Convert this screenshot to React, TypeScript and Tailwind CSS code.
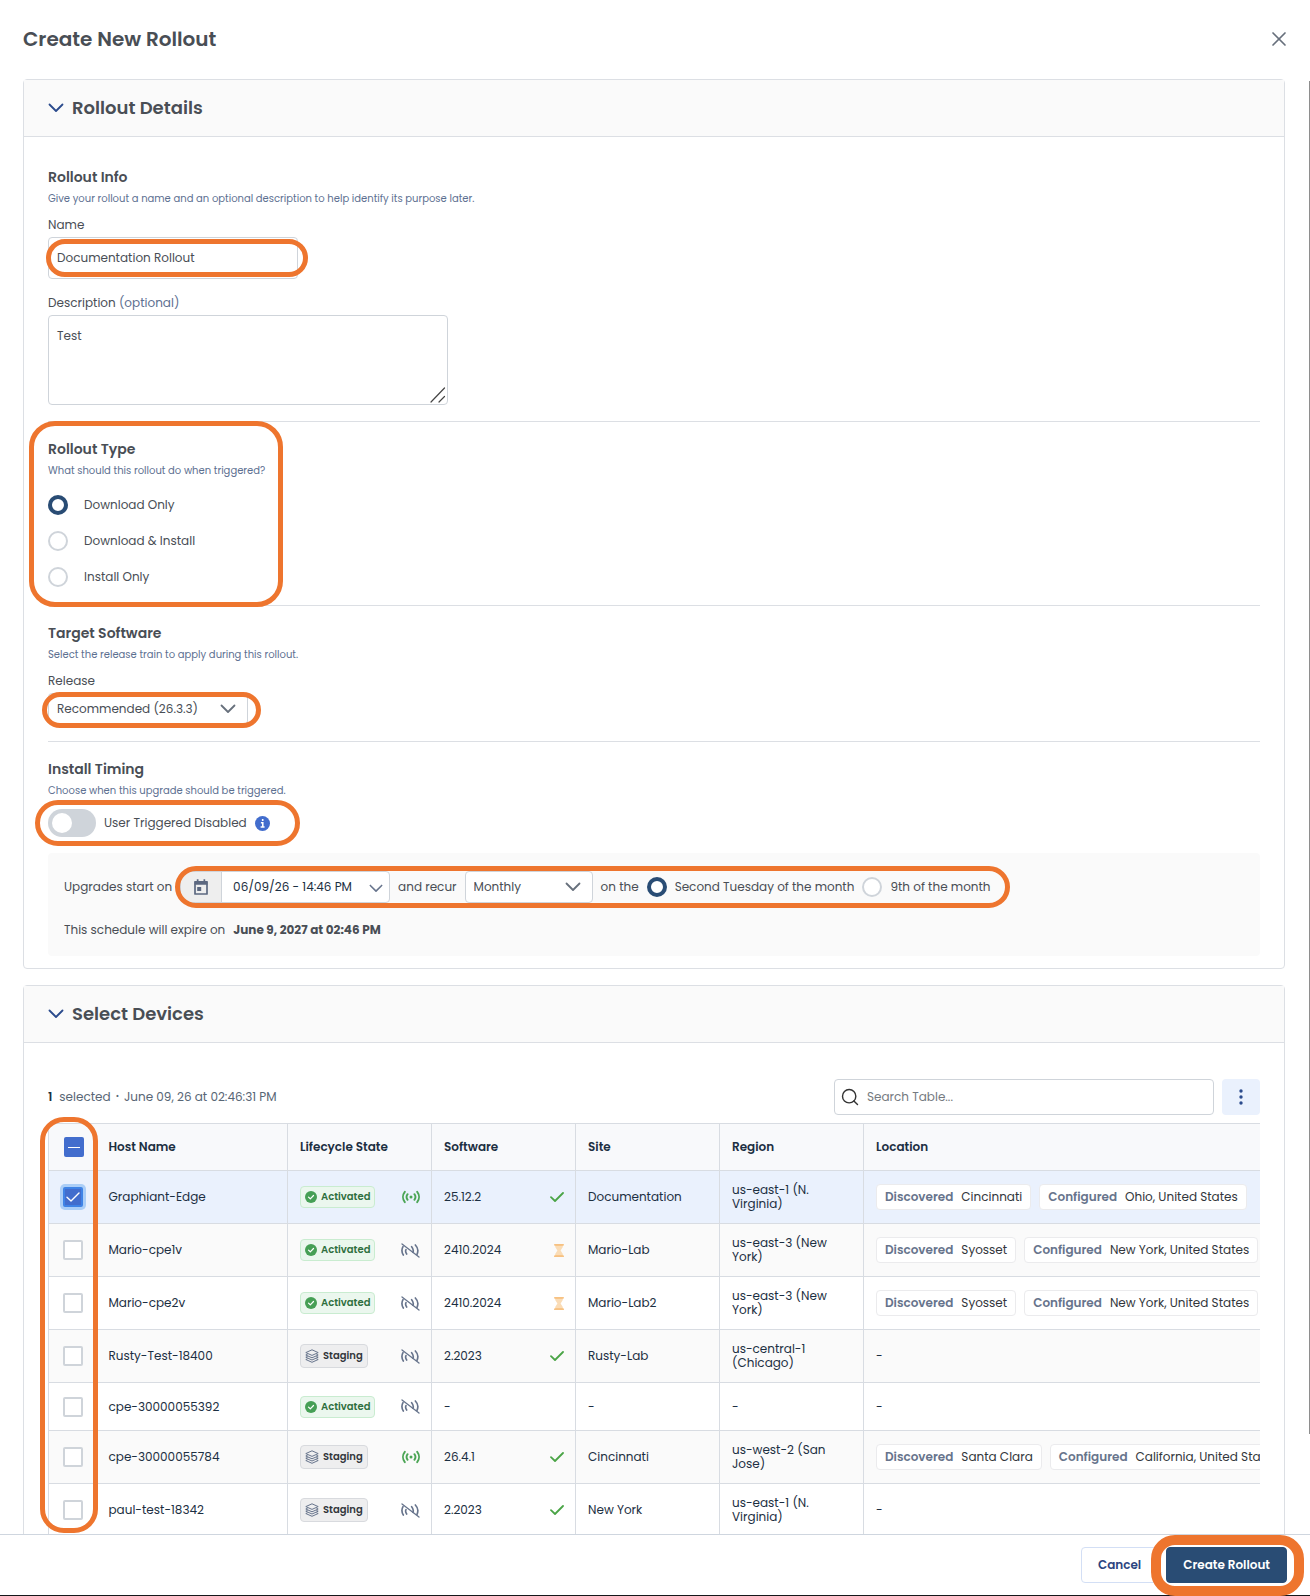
import React from 'react';
import { Search, X } from 'lucide-react';

interface Device {
  id: string;
  host: string;
  state: 'activated' | 'staging';
  online: boolean;
  software: string;
  softwareStatus?: 'current' | 'pending';
  site: string;
  region: string;
  discovered?: string;
  configured?: string;
}

const devices: Device[] = [
  {
    id: '1',
    host: 'Graphiant-Edge',
    state: 'activated',
    online: true,
    software: '25.12.2',
    softwareStatus: 'current',
    site: 'Documentation',
    region: 'us-east-1 (N. Virginia)',
    discovered: 'Cincinnati',
    configured: 'Ohio, United States'
  },
  {
    id: '2',
    host: 'Mario-cpe1v',
    state: 'activated',
    online: false,
    software: '2410.2024',
    softwareStatus: 'pending',
    site: 'Mario-Lab',
    region: 'us-east-3 (New York)',
    discovered: 'Syosset',
    configured: 'New York, United States'
  },
  {
    id: '3',
    host: 'Mario-cpe2v',
    state: 'activated',
    online: false,
    software: '2410.2024',
    softwareStatus: 'pending',
    site: 'Mario-Lab2',
    region: 'us-east-3 (New York)',
    discovered: 'Syosset',
    configured: 'New York, United States'
  },
  {
    id: '4',
    host: 'Rusty-Test-18400',
    state: 'staging',
    online: false,
    software: '2.2023',
    softwareStatus: 'current',
    site: 'Rusty-Lab',
    region: 'us-central-1 (Chicago)'
  },
  {
    id: '5',
    host: 'cpe-30000055392',
    state: 'activated',
    online: false,
    software: '-',
    site: '-',
    region: '-'
  },
  {
    id: '6',
    host: 'cpe-30000055784',
    state: 'staging',
    online: true,
    software: '26.4.1',
    softwareStatus: 'current',
    site: 'Cincinnati',
    region: 'us-west-2 (San Jose)',
    discovered: 'Santa Clara',
    configured: 'California, United States'
  },
  {
    id: '7',
    host: 'paul-test-18342',
    state: 'staging',
    online: false,
    software: '2.2023',
    softwareStatus: 'current',
    site: 'New York',
    region: 'us-east-1 (N. Virginia)'
  }
];

const radioClass =
  'm-0 h-5 w-5 shrink-0 appearance-none rounded-full border-2 border-[#cfd4da] bg-white checked:border-4 checked:border-[#294c74]';

function Chevron({ className }: { className: string }) {
  return (
    <svg viewBox="0 0 16 10" fill="none" stroke="currentColor" strokeWidth="1.8" strokeLinecap="round" strokeLinejoin="round" className={className}>
      <path d="M1.5 1.5 8 8l6.5-6.5" />
    </svg>
  );
}

function CheckMark({ className }: { className: string }) {
  return (
    <svg viewBox="0 0 14 10" fill="none" stroke="currentColor" strokeLinecap="round" strokeLinejoin="round" className={className}>
      <path d="m1 5.2 4 3.8L13 1" />
    </svg>
  );
}

// Orange outline that draws attention to a control
function Highlight({ className }: { className: string }) {
  return <span aria-hidden="true" className={`pointer-events-none absolute z-10 border-[#ee752e] ${className}`} />;
}

function SignalIcon() {
  return (
    <svg viewBox="0 0 18 14" fill="none" stroke="#4ba555" strokeWidth="1.9" strokeLinecap="round" className="h-[14px] w-[18px]">
      <circle cx="9" cy="7" r="1.5" fill="#4ba555" stroke="none" />
      <path d="M5.6 4.2a4.6 4.6 0 0 0 0 5.6M12.4 4.2a4.6 4.6 0 0 1 0 5.6M2.8 1.8a8.4 8.4 0 0 0 0 10.4M15.2 1.8a8.4 8.4 0 0 1 0 10.4" />
    </svg>
  );
}

function SignalOffIcon() {
  return (
    <svg viewBox="0 0 57 45" fill="none" stroke="#67748c" strokeWidth="5" strokeLinecap="round" className="h-[15px] w-[19px]">
      <path d="M3 3 54 42" strokeWidth="4" />
      <path d="M6 11C2 18 2 28 7 36M15 20c-2 4-1 9 2 13M32 11c5 6 6 11 4 17M43 6c8 8 9 19 5 28" />
    </svg>
  );
}

function LayersIcon() {
  return (
    <svg viewBox="0 0 14 14" fill="none" stroke="#67748c" strokeWidth="1" strokeLinejoin="round" className="h-[14px] w-[14px]">
      <path d="M7 .8 13.2 3.6 7 6.4.8 3.6z" />
      <path d="M2.6 5.2.8 6 7 8.8 13.2 6l-1.8-.8M2.6 7.4l-1.8.8L7 11l6.2-2.8-1.8-.8M2.6 9.7l-1.8.8L7 13.3l6.2-2.8-1.8-.8" />
    </svg>
  );
}

function HourglassIcon() {
  return (
    <svg viewBox="0 0 10 13" className="h-[13px] w-[10px]">
      <path d="M1.2 1h7.6v2L6.6 6.500l2.200 3.500v2H1.200v-2l2.200-3.500L1.200 3z" fill="#fadcb6" />
      <path d="M.6.8h8.800M.6 12.200h8.800" stroke="#f5ae5b" strokeWidth="1.2" strokeLinecap="round" />
    </svg>
  );
}

function StateBadge({ state }: { state: Device['state'] }) {
  if (state === 'activated') {
    return (
      <span className="flex h-[22px] items-center gap-1 rounded border border-[#c9ecd0] bg-[#ebf7ee] px-1 text-[10px] font-semibold text-[#2f6f3e]">
        <svg viewBox="0 0 12 12" className="h-3 w-3">
          <circle cx="6" cy="6" r="6" fill="#469f55" />
          <path d="m3.5 6.1 1.8 1.7 3.2-3.3" fill="none" stroke="#fff" strokeWidth="1.2" strokeLinecap="round" strokeLinejoin="round" />
        </svg>
        Activated
      </span>
    );
  }
  return (
    <span className="flex h-6 items-center gap-1 rounded border border-[#d8dade] bg-[#eeeeef] px-1 text-[10px] font-semibold text-[#32363b]">
      <LayersIcon />
      Staging
    </span>
  );
}

function LocationTag({ label, value }: { label: string; value: string }) {
  return (
    <span className="flex h-[26px] items-center gap-2 rounded border border-[#ebebed] bg-white px-2 whitespace-nowrap text-[#32363b]">
      <b className="font-semibold text-[#67748c]">{label}</b>
      {value}
    </span>
  );
}

function PanelHeader({ title }: { title: string }) {
  return (
    <h2 className="border-b border-[#dcdfe4] bg-[#fafafa]">
      <button type="button" aria-expanded="true" className="flex h-14 w-full items-center gap-2 px-6 text-left text-lg font-semibold">
        <Chevron className="h-[10px] w-4 text-[#2b4b8d]" />
        {title}
      </button>
    </h2>
  );
}

function SectionTitle({ title, hint }: { title: string; hint: string }) {
  return (
    <div>
      <h3 className="text-sm leading-6 font-semibold">{title}</h3>
      <p className="text-[10px] leading-5 text-[#5d7091]">{hint}</p>
    </div>
  );
}

function RolloutDetails() {
  return (
    <section className="rounded border border-[#dcdfe4]">
      <PanelHeader title="Rollout Details" />
      <div className="px-6 pt-7 pb-3">
        <div className="border-b border-[#dcdfe4] pb-4">
          <SectionTitle title="Rollout Info" hint="Give your rollout a name and an optional description to help identify its purpose later." />
          <label htmlFor="name" className="mt-1.5 mb-0.5 block">Name</label>
          <div className="relative w-[250px]">
            <input id="name" defaultValue="Documentation Rollout" className="block h-[42px] w-full rounded-sm border border-[#cfd4da] px-2" />
            <Highlight className="-left-[2px] -right-[10px] top-[2px] bottom-[2px] rounded-full border-[5px]" />
          </div>
          <label htmlFor="description" className="mt-[14px] mb-0.5 block">
            Description <span className="text-[#5d7091]">(optional)</span>
          </label>
          <div className="relative w-[400px] max-w-full">
            <textarea id="description" defaultValue="Test" className="block h-[90px] w-full resize-none rounded-sm border border-[#cfd4da] px-2 py-[10px]" />
            <svg viewBox="0 0 16 16" stroke="#444" strokeWidth="1.2" strokeLinecap="round" className="absolute right-[2px] bottom-[2px] h-4 w-4">
              <path d="M1 15 14.5 1M9 15l5.5-5.5" />
            </svg>
          </div>
        </div>

        <div className="border-b border-[#dcdfe4]">
          <div className="relative w-fit pt-[15px] pb-[10px]">
            <SectionTitle title="Rollout Type" hint="What should this rollout do when triggered?" />
            <div className="mt-1.5 flex flex-col">
              {['Download Only', 'Download & Install', 'Install Only'].map((type, i) => (
                <label key={type} className="flex h-9 items-center gap-4">
                  <input type="radio" name="type" defaultChecked={i === 0} className={radioClass} />
                  {type}
                </label>
              ))}
            </div>
            <Highlight className="-top-px -right-[18px] -bottom-[2px] -left-[19px] rounded-[26px] border-[5px]" />
          </div>
        </div>

        <div className="border-b border-[#dcdfe4] pt-[15px] pb-4">
          <SectionTitle title="Target Software" hint="Select the release train to apply during this rollout." />
          <label htmlFor="release" className="mt-1.5 mb-0.5 block">Release</label>
          <div className="relative w-[200px]">
            <select id="release" className="block h-8 w-full appearance-none rounded-sm border border-[#cfd4da] bg-white px-2">
              <option>Recommended (26.3.3)</option>
            </select>
            <Chevron className="pointer-events-none absolute top-[11px] right-3 h-[10px] w-4 text-[#67707c]" />
            <Highlight className="-top-px -right-[13px] -bottom-[3px] -left-[6px] rounded-full border-[5px]" />
          </div>
        </div>

        <div className="pt-[15px]">
          <SectionTitle title="Install Timing" hint="Choose when this upgrade should be triggered." />
          <div className="relative mt-2 flex w-fit items-center gap-2">
            <label className="flex items-center gap-2">
              <input
                type="checkbox"
                role="switch"
                className="m-0 h-7 w-12 appearance-none rounded-full bg-[#cfd4da] p-1 before:block before:h-5 before:w-5 before:rounded-full before:bg-white"
              />
              User Triggered Disabled
            </label>
            <svg viewBox="0 0 16 16" className="h-[15px] w-[15px]">
              <circle cx="8" cy="8" r="8" fill="#426dcd" />
              <path d="M8.2 3.3v1.900M6.300 7.200h2v4.500M6 11.800h4.200" fill="none" stroke="#fff" strokeWidth="1.7" />
            </svg>
            <Highlight className="-top-[9px] -right-[30px] -bottom-[9px] -left-[13px] rounded-full border-[5px]" />
          </div>

          <div className="mt-4 flex flex-col gap-[17px] rounded bg-[#fafafa] px-4 pt-[18px] pb-4">
            <div className="flex items-center gap-2">
              <span>Upgrades start on</span>
              <div className="relative flex items-center gap-2">
                <div className="relative flex h-8 w-[210px] overflow-hidden rounded-sm border border-[#cfd4da] bg-white text-[#1c2f42]">
                  <span className="flex w-[41px] shrink-0 items-center justify-center border-r border-[#cfd4da] bg-[#eeeeee]">
                    <svg viewBox="0 0 14 16" className="h-4 w-[14px]">
                      <path d="M1 2.8h12V15H1z" fill="none" stroke="#5c6880" strokeWidth="1.7" strokeLinejoin="round" />
                      <path d="M.6 2.500h12.800v3.300H.6zM2.800.2h1.700v3H2.800zM9.500.2h1.700v3H9.500zM3.200 8h4v4h-4z" fill="#5c6880" />
                    </svg>
                  </span>
                  <input aria-label="Start date" defaultValue="06/09/26 - 14:46 PM" className="w-full min-w-0 pl-[11px]" />
                  <Chevron className="absolute top-3 right-[6px] h-[9px] w-[14px] text-[#67748c]" />
                </div>
                <span>and recur</span>
                <div className="relative w-32">
                  <select aria-label="Recurrence" className="block h-8 w-full appearance-none rounded-sm border border-[#cfd4da] bg-white px-2">
                    <option>Monthly</option>
                  </select>
                  <Chevron className="pointer-events-none absolute top-[11px] right-3 h-[10px] w-4 text-[#67707c]" />
                </div>
                <span>on the</span>
                <label className="flex items-center gap-2">
                  <input type="radio" name="day" defaultChecked className={radioClass} />
                  Second Tuesday of the month
                </label>
                <label className="flex items-center gap-2">
                  <input type="radio" name="day" className={radioClass} />
                  9th of the month
                </label>
                <Highlight className="-top-[5px] -right-[19px] -bottom-[5px] -left-[5px] rounded-full border-[5px]" />
              </div>
            </div>
            <p className="flex h-5 items-center gap-2">
              This schedule will expire on
              <b className="font-bold">June 9, 2027 at 02:46 PM</b>
            </p>
          </div>
        </div>
      </div>
    </section>
  );
}

function SelectDevices() {
  return (
    <section className="mt-4 rounded border border-[#dcdfe4]">
      <PanelHeader title="Select Devices" />
      <div className="px-6 pt-9">
        <div className="flex items-center justify-between">
          <p className="flex items-center text-[#586675]">
            <b className="mr-[7px] font-semibold text-[#1c2f42]">1</b>
            selected
            <span className="mx-[5px] text-[8px]">•</span>
            June 09, 26 at 02:46:31 PM
          </p>
          <div className="flex gap-2">
            <div className="relative w-[380px]">
              <Search strokeWidth={1.7} className="absolute top-2 left-[6px] h-5 w-5 text-[#333]" />
              <input type="search" aria-label="Search table" placeholder="Search Table..." className="block h-9 w-full rounded-sm border border-[#cfd4da] pr-2 pl-8 placeholder:text-[#757a80]" />
            </div>
            <button type="button" aria-label="Table options" className="flex h-9 w-[38px] items-center justify-center rounded-sm bg-[#eaf1fd]">
              <svg viewBox="0 0 4 16" fill="#2b4b8d" className="h-4 w-1">
                <circle cx="2" cy="2" r="1.7" />
                <circle cx="2" cy="8" r="1.7" />
                <circle cx="2" cy="14" r="1.7" />
              </svg>
            </button>
          </div>
        </div>

        <div className="relative mt-2">
          <div className="overflow-hidden">
            <table className="w-full table-fixed border-t border-l border-[#d8dce2] text-left text-[#1c2f42]">
              <thead>
                <tr className="h-[47px] border-b border-[#d8dce2] bg-[#f8f9fb]">
                  <th className="w-12 pl-[15px]">
                    <button type="button" aria-label="Clear selection" className="flex h-5 w-5 items-center justify-center rounded-xs bg-[#426dcd]">
                      <span className="h-px w-3 bg-white" />
                    </button>
                  </th>
                  <th className="w-[191px] border-r border-[#d8dce2] px-3 font-semibold">Host Name</th>
                  <th className="w-36 border-r border-[#d8dce2] px-3 font-semibold">Lifecycle State</th>
                  <th className="w-36 border-r border-[#d8dce2] px-3 font-semibold">Software</th>
                  <th className="w-36 border-r border-[#d8dce2] px-3 font-semibold">Site</th>
                  <th className="w-36 border-r border-[#d8dce2] px-3 font-semibold">Region</th>
                  <th className="px-3 font-semibold">Location</th>
                </tr>
              </thead>
              <tbody>
                {devices.map((device, i) => (
                  <tr
                    key={device.id}
                    className={`border-b border-[#d8dce2] ${device.region === '-' ? 'h-12' : 'h-[53px]'} ${
                      i === 0 ? 'bg-[#eaf1fd]' : i % 2 ? 'bg-[#fafafa]' : 'bg-white'
                    }`}
                  >
                    <td className="pl-[14px]">
                      <span className="relative block h-5 w-5">
                        <input
                          type="checkbox"
                          aria-label={device.host}
                          defaultChecked={i === 0}
                          className="peer block h-5 w-5 appearance-none rounded-xs border-2 border-[#cfd4da] bg-white checked:border-[#3f83e6] checked:bg-[#426dcd] checked:ring-3 checked:ring-[#abcef7]"
                        />
                        <CheckMark className="pointer-events-none absolute top-[5px] left-[3px] hidden h-[10px] w-[14px] stroke-[1.4] text-white peer-checked:block" />
                      </span>
                    </td>
                    <td className="border-r border-[#d8dce2] px-3">{device.host}</td>
                    <td className="border-r border-[#d8dce2] pr-[11px] pl-3">
                      <div className="flex items-center justify-between">
                        <StateBadge state={device.state} />
                        {device.online ? <SignalIcon /> : <SignalOffIcon />}
                      </div>
                    </td>
                    <td className="border-r border-[#d8dce2] pr-[11px] pl-3">
                      <div className="flex items-center justify-between">
                        {device.software}
                        {device.softwareStatus === 'current' && <CheckMark className="h-[10px] w-[14px] stroke-[1.8] text-[#4aa446]" />}
                        {device.softwareStatus === 'pending' && <HourglassIcon />}
                      </div>
                    </td>
                    <td className="border-r border-[#d8dce2] px-3">{device.site}</td>
                    <td className="border-r border-[#d8dce2] px-3 leading-[14px]">{device.region}</td>
                    <td className="px-3">
                      {device.discovered && device.configured ? (
                        <div className="flex gap-2">
                          <LocationTag label="Discovered" value={device.discovered} />
                          <LocationTag label="Configured" value={device.configured} />
                        </div>
                      ) : (
                        '-'
                      )}
                    </td>
                  </tr>
                ))}
              </tbody>
            </table>
          </div>
          <Highlight className="-top-[6px] bottom-1 -left-[8px] w-[58px] rounded-[24px] border-[5px]" />
        </div>
      </div>
    </section>
  );
}

export default function App() {
  return (
    <div
      role="dialog"
      aria-labelledby="dialog-title"
      className="flex h-screen flex-col border-b border-[#15171a] bg-white font-['Poppins','Inter',sans-serif] text-xs leading-5 text-[#494e55]"
    >
      <header className="flex h-[79px] shrink-0 items-center justify-between pr-[19px] pb-0.5 pl-[23px]">
        <h1 id="dialog-title" className="text-xl font-semibold">Create New Rollout</h1>
        <button type="button" aria-label="Close">
          <X strokeWidth={1.7} className="h-6 w-6 text-[#67707c]" />
        </button>
      </header>

      <div className="relative min-h-0 flex-1">
        <main className="h-full overflow-y-auto pr-[25px] pl-[23px] [scrollbar-width:none]">
          <RolloutDetails />
          <SelectDevices />
        </main>
        <span aria-hidden="true" className="absolute top-[2px] right-0 h-[93%] w-px bg-[#8e8e8e]" />
      </div>

      <footer className="flex shrink-0 items-center justify-end gap-2 border-t border-[#cfd6df] py-3 pr-[23px]">
        <button type="button" className="h-9 rounded-sm border border-[#d3dff5] px-4 font-semibold text-[#2b4480]">Cancel</button>
        <div className="relative">
          <button type="button" className="block h-9 rounded-sm border border-[#294c74] bg-[#294c74] px-4 font-semibold text-white">Create Rollout</button>
          <Highlight className="-top-3 -right-[17px] -bottom-[13px] -left-[15px] rounded-[24px] border-10" />
        </div>
      </footer>
    </div>
  );
}
